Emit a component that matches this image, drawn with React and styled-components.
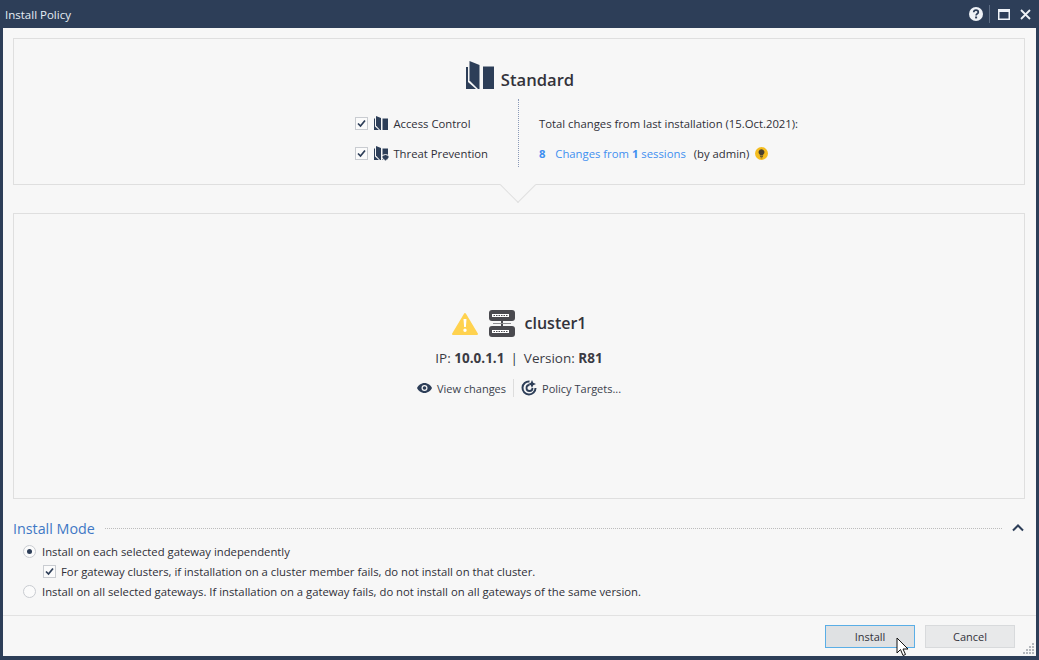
import styled, { createGlobalStyle } from 'styled-components';

const GlobalStyle = createGlobalStyle`
  html, body {
    margin: 0;
    padding: 0;
    background: #2d3e58;
  }
  body {
    font-family: "Open Sans", "Noto Sans", "Liberation Sans", sans-serif;
    font-size: 11px;
    color: #2f2f38;
  }
`;

const Window = styled.div`
  position: relative;
  width: 1039px;
  height: 660px;
  box-sizing: border-box;
  padding: 0 3px 4px;
  display: flex;
  flex-direction: column;
  background: #2d3e58;
  overflow: hidden;
`;

const TitleBar = styled.div`
  height: 28px;
  flex: none;
  padding-left: 2px;
  display: flex;
  align-items: center;
  justify-content: space-between;
  color: #e6edf5;
  font-size: 11.5px;
`;

const TitleActions = styled.div`
  display: flex;
  align-items: center;
  padding-right: 2px;
`;

const TitleButton = styled.button`
  width: 18px;
  height: 18px;
  padding: 0;
  border: 0;
  background: none;
  display: flex;
  align-items: center;
  justify-content: center;
`;

const TitleSeparator = styled.div`
  width: 1px;
  height: 18px;
  margin: 0 5px 0 4px;
  background: #5a6a82;
`;

const Body = styled.div`
  flex: 1;
  min-height: 0;
  display: flex;
  flex-direction: column;
  background: #f7f7f7;
`;

const Content = styled.div`
  flex: 1;
  min-height: 0;
  padding: 10px 11px 0 10px;
  display: flex;
  flex-direction: column;
`;

const PolicyPanel = styled.section`
  position: relative;
  height: 147px;
  flex: none;
  box-sizing: border-box;
  border: 1px solid #dfdfdf;
  padding-top: 21px;
  display: flex;
  flex-direction: column;
  align-items: center;
`;

const Notch = styled.div`
  position: absolute;
  left: 491px;
  bottom: -14px;
  width: 26px;
  height: 26px;
  box-sizing: border-box;
  background: #f7f7f7;
  border-right: 1px solid #dfdfdf;
  border-bottom: 1px solid #dfdfdf;
  transform: rotate(45deg) scale(0.98);
`;

const PolicyTitle = styled.div`
  display: flex;
  align-items: center;
  gap: 7px;
  height: 30px;
  margin-left: 2px;
  font-size: 16.600px;
  font-weight: 600;
  color: #33333b;
`;

const PolicyName = styled.span`
  margin-top: 9px;
`;

const Columns = styled.div`
  width: 100%;
  margin-top: 9px;
  display: grid;
  grid-template-columns: 1fr 1fr;
`;

const Blades = styled.div`
  height: 80px;
  box-sizing: border-box;
  padding: 15px 30px 0 0;
  border-right: 1px dotted #8b9ab8;
  display: flex;
  flex-direction: column;
  align-items: flex-end;
`;

const BladeList = styled.div`
  display: flex;
  flex-direction: column;
  gap: 12px;
`;

const BladeRow = styled.div`
  height: 18px;
  display: flex;
  align-items: center;
  font-size: 11.3px;
`;

const Box = styled.span`
  width: 11px;
  height: 11px;
  flex: none;
  border: 1px solid #c9ccd1;
  background: #fbfbfb;
  display: flex;
  align-items: center;
  justify-content: center;
  margin-right: ${p => p.$gap}px;
`;

const ChangesInfo = styled.div`
  height: 80px;
  box-sizing: border-box;
  padding: 15px 0 0 20px;
  display: flex;
  flex-direction: column;
  gap: 12px;
  font-size: 11.3px;
`;

const InfoRow = styled.div`
  height: 18px;
  display: flex;
  align-items: center;
  white-space: pre;
`;

const Link = styled.span`
  color: #3f8ff0;
  font-weight: ${p => (p.$bold ? 700 : 400)};
`;

const ChangeCount = styled(Link)`
  margin-right: 1px;
`;

const Author = styled.span`
  margin-left: 2px;
`;

const GatewayPanel = styled.section`
  margin-top: 28px;
  height: 286px;
  flex: none;
  box-sizing: border-box;
  border: 1px solid #dfdfdf;
  padding-top: 95px;
  display: flex;
  flex-direction: column;
  align-items: center;
`;

const GatewayTitle = styled.div`
  height: 28px;
  display: flex;
  align-items: center;
  font-size: 16px;
  font-weight: 600;
  color: #33333b;
`;

const GatewayMeta = styled.div`
  margin-top: 12px;
  font-size: 13.500px;
  display: flex;
  gap: 6px;
  color: #3b3b44;

  b {
    font-weight: 700;
  }
`;

const MetaBar = styled.span`
  color: #30383a;
`;

const GatewayActions = styled.div`
  margin-top: 12px;
  display: flex;
  align-items: center;
  font-size: 11px;
  color: #3b3f4c;
`;

const Action = styled.div`
  display: flex;
  align-items: center;
  gap: 5px;
`;

const ActionDivider = styled.div`
  width: 1px;
  height: 18px;
  margin: 0 7px;
  background: #dddddd;
`;

const ModeHeader = styled.div`
  margin-top: 19px;
  height: 20px;
  display: flex;
  align-items: center;
  gap: 10px;
`;

const ModeTitle = styled.div`
  color: #3f78c5;
  font-size: 14.300px;
`;

const DottedRule = styled.div`
  flex: 1;
  border-top: 1px dotted #bcbcbc;
`;

const ModeOptions = styled.div`
  margin-top: 4px;
  padding-left: 10px;
  display: flex;
  flex-direction: column;
  gap: 2px;
  font-size: 11.3px;
`;

const OptionRow = styled.div`
  height: 18px;
  display: flex;
  align-items: center;
  padding-left: ${p => p.$indent || 0}px;
`;

const Radio = styled.span`
  width: 11px;
  height: 11px;
  flex: none;
  margin-right: 6px;
  border: 1px solid #c9ccd1;
  border-radius: 50%;
  background: #fbfbfb;
  display: flex;
  align-items: center;
  justify-content: center;

  &::after {
    content: '';
    width: 5px;
    height: 5px;
    border-radius: 50%;
    background: ${p => (p.$checked ? '#2d3e58' : 'transparent')};
  }
`;

const Footer = styled.div`
  position: relative;
  height: 41px;
  flex: none;
  box-sizing: border-box;
  border-top: 1px solid #e2e2e2;
  padding: 9px 21px 0 0;
  display: flex;
  justify-content: flex-end;
  align-items: flex-start;
  gap: 10px;
`;

const Button = styled.button`
  width: 90px;
  height: 23px;
  box-sizing: border-box;
  font-family: inherit;
  font-size: 11px;
  color: #33333b;
  background: ${p => (p.$primary ? '#dfe1e3' : '#e8e9ea')};
  border: 1px solid ${p => (p.$primary ? '#5aaee6' : '#d8dadc')};
  padding: 0;
`;

const Pointer = styled.svg`
  position: absolute;
  left: 896px;
  top: 637px;
`;

const Grip = styled.svg`
  position: absolute;
  right: 2px;
  bottom: 2px;
`;

const BookIcon = () => (
  <svg width="28" height="28" viewBox="0 0 28 28" style={{ flex: 'none' }}>
    <path fill="#2d3e58" d="M0 6h2v15l8 7H0z" />
    <path fill="#2d3e58" d="M3.500 0l10 4v24h-1.500L3.500 19.500z" />
    <path fill="#2d3e58" d="M17 5.500h11V28H17z" />
  </svg>
);

const BladeIcon = ({ shield }) => (
  <svg width="16" height="16" viewBox="0 0 16 16" style={{ flex: 'none', marginRight: 4 }}>
    <path fill="#2d3e58" d="M1 3.500h1v8l4 3.500H1z" />
    <path fill="#2d3e58" d="M3 1l5 2v12h-1l-4-4.500z" />
    <path fill="#2d3e58" d="M9.500 3.500H15V15H9.500z" />
    {shield && <path fill="#2d3e58" stroke="#f7f7f7" d="M9 10.500l3.500-1 3.500 1v2.500l-3.500 3-3.500-3z" />}
  </svg>
);

const Check = () => (
  <svg width="9" height="9" viewBox="0 0 9 9">
    <path d="M1 4.500l2.500 2.500L8 1.500" fill="none" stroke="#2d3e58" strokeWidth="1.700" />
  </svg>
);

const Bulb = () => (
  <svg width="13" height="13" viewBox="0 0 13 13" style={{ marginLeft: 6 }}>
    <circle cx="6.500" cy="6.500" r="6.500" fill="#f5bd1f" />
    <path fill="#4a4130" d="M6.500 2.200a3 3 0 0 1 1.700 5.400V8.600H4.800V7.600A3 3 0 0 1 6.500 2.200zM5 9.300h3v.8H5zM5.600 10.500h1.800v.7H5.600z" />
  </svg>
);

const Warning = () => (
  <svg width="26" height="23" viewBox="0 0 26 23" style={{ marginRight: 11 }}>
    <path fill="#ffd24f" stroke="#ffd24f" strokeWidth="2" strokeLinejoin="round" d="M13 2L25 22H1z" />
    <path fill="#fff" d="M11.500 7h3l-.6 8h-1.800zM13 16.500a1.700 1.700 0 1 1 0 3.400 1.700 1.700 0 0 1 0-3.400z" />
  </svg>
);

const ClusterIcon = () => (
  <svg width="26" height="27" viewBox="0 0 26 27" style={{ marginRight: 10 }}>
    <rect x="0" y="0" width="26" height="11" rx="3" fill="#4a4a4f" />
    <rect x="0" y="16" width="26" height="11" rx="3" fill="#4a4a4f" />
    <path fill="#4a4a4f" d="M12 10h2v7h-2z" />
    <path fill="#8d8d90" d="M4 13h18v1H4z" />
    <path d="M3 4h17v3H3zM3 20h17v3H3z" fill="#fff" />
    <path d="M4.500 5.500h14M4.500 21.500h14" stroke="#4a4a4f" strokeWidth="1" strokeDasharray="1.500 1" />
  </svg>
);

const Eye = () => (
  <svg width="15" height="10" viewBox="0 0 15 10">
    <path fill="#2d3e58" d="M7.500 0C11 0 13.700 2.400 15 5c-1.300 2.600-4 5-7.500 5S1.300 7.600 0 5C1.300 2.400 4 0 7.500 0z" />
    <circle cx="7.500" cy="5" r="3" fill="#f7f7f7" />
    <circle cx="7.500" cy="5" r="1.800" fill="#2d3e58" />
  </svg>
);

const TargetIcon = () => (
  <svg width="16" height="16" viewBox="0 0 16 16">
    <path d="M8.500 1.500a6.500 6.500 0 1 0 6 6.500" fill="none" stroke="#2d3e58" strokeWidth="2" />
    <path d="M8.500 5a3 3 0 1 0 3 3" fill="none" stroke="#2d3e58" strokeWidth="1.800" />
    <path fill="#2d3e58" d="M11 0l1.200 2.800L15 4l-2.800 1.200L11 8 9.800 5.200 7 4l2.800-1.200z" />
  </svg>
);

export default function App() {
  return (
    <Window>
      <GlobalStyle />
      <TitleBar>
        Install Policy
        <TitleActions>
          <TitleButton aria-label="Help">
            <svg width="14" height="14" viewBox="0 0 14 14">
              <circle cx="7" cy="7" r="7" fill="#eef2f7" />
              <path d="M4.700 5.300C4.800 3.900 5.800 3.200 7 3.200s2.300.8 2.300 2c0 1.500-2.200 1.600-2.200 3.200" fill="none" stroke="#2d3e58" strokeWidth="1.700" />
              <rect x="6.100" y="9.500" width="2" height="1.900" fill="#2d3e58" />
            </svg>
          </TitleButton>
          <TitleSeparator />
          <TitleButton aria-label="Maximize">
            <svg width="12" height="11" viewBox="0 0 12 11">
              <path d="M0 0h12v11H0zM1.500 3v6.500h9V3z" fill="#eef2f7" fillRule="evenodd" />
            </svg>
          </TitleButton>
          <TitleButton aria-label="Close" style={{ marginLeft: 3 }}>
            <svg width="11" height="11" viewBox="0 0 11 11">
              <path d="M1 1l9 9M10 1l-9 9" stroke="#eef2f7" strokeWidth="1.800" />
            </svg>
          </TitleButton>
        </TitleActions>
      </TitleBar>
      <Body>
        <Content>
          <PolicyPanel>
            <PolicyTitle>
              <BookIcon />
              <PolicyName>Standard</PolicyName>
            </PolicyTitle>
            <Columns>
              <Blades>
                <BladeList>
                  <BladeRow>
                    <Box $gap={5}><Check /></Box>
                    <BladeIcon />
                    Access Control
                  </BladeRow>
                  <BladeRow>
                    <Box $gap={5}><Check /></Box>
                    <BladeIcon shield />
                    Threat Prevention
                  </BladeRow>
                </BladeList>
              </Blades>
              <ChangesInfo>
                <InfoRow>Total changes from last installation (15.Oct.2021):</InfoRow>
                <InfoRow>
                  <ChangeCount $bold>8</ChangeCount>
                  <Link>{'   Changes from '}</Link>
                  <Link $bold>1</Link>
                  <Link>{' sessions'}</Link>
                  <Author>{'  (by admin)'}</Author>
                  <Bulb />
                </InfoRow>
              </ChangesInfo>
            </Columns>
            <Notch />
          </PolicyPanel>
          <GatewayPanel>
            <GatewayTitle>
              <Warning />
              <ClusterIcon />
              cluster1
            </GatewayTitle>
            <GatewayMeta>
              <span>IP: <b>10.0.1.1</b></span>
              <MetaBar>|</MetaBar>
              <span>Version: <b>R81</b></span>
            </GatewayMeta>
            <GatewayActions>
              <Action><Eye />View changes</Action>
              <ActionDivider />
              <Action><TargetIcon />Policy Targets...</Action>
            </GatewayActions>
          </GatewayPanel>
          <ModeHeader>
            <ModeTitle>Install Mode</ModeTitle>
            <DottedRule />
            <svg width="12" height="8" viewBox="0 0 12 8" style={{ marginRight: 1 }}>
              <path d="M1 6.500l5-5 5 5" fill="none" stroke="#2d3e58" strokeWidth="2" />
            </svg>
          </ModeHeader>
          <ModeOptions>
            <OptionRow>
              <Radio $checked />
              Install on each selected gateway independently
            </OptionRow>
            <OptionRow $indent={20}>
              <Box $gap={5}><Check /></Box>
              For gateway clusters, if installation on a cluster member fails, do not install on that cluster.
            </OptionRow>
            <OptionRow>
              <Radio />
              Install on all selected gateways. If installation on a gateway fails, do not install on all gateways of the same version.
            </OptionRow>
          </ModeOptions>
        </Content>
        <Footer>
          <Button $primary>Install</Button>
          <Button>Cancel</Button>
          <Grip width="11" height="11" viewBox="0 0 11 11">
            <path fill="#b4b8bd" d="M9 0h2v2H9zM6 3h2v2H6zM9 3h2v2H9zM3 6h2v2H3zM6 6h2v2H6zM9 6h2v2H9zM0 9h2v2H0zM3 9h2v2H3zM6 9h2v2H6zM9 9h2v2H9z" />
          </Grip>
        </Footer>
      </Body>
      <Pointer width="14" height="20" viewBox="0 0 14 20">
        <path d="M1 1v15l3.500-3.500L7 18.500l2.500-1-2.500-5.500h5z" fill="#fff" stroke="#111" />
      </Pointer>
    </Window>
  );
}
